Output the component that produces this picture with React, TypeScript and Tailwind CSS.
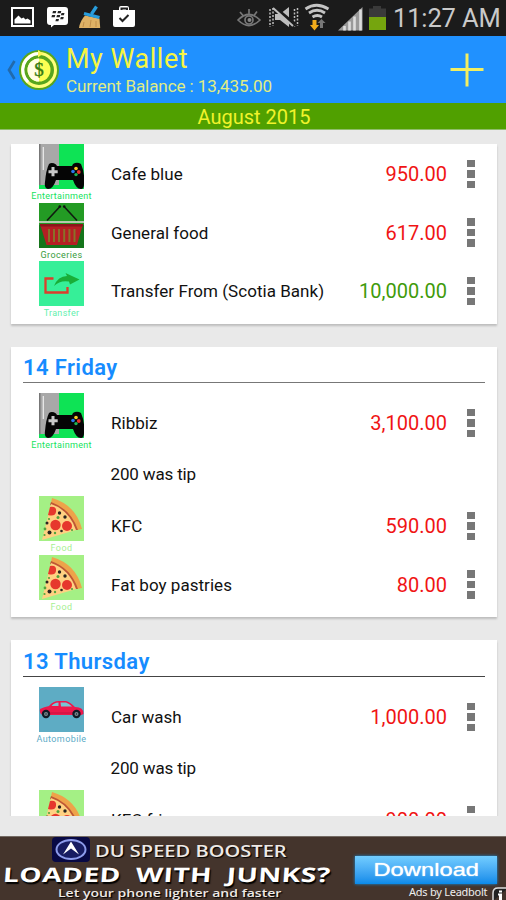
import React from "react";

type Category = "Entertainment" | "Groceries" | "Transfer" | "Food" | "Automobile";

interface Entry {
  category: Category;
  name: string;
  amount: string;
  income?: boolean;
  note?: string;
}

const labelStyles: Record<Category, string> = {
  Entertainment: "text-[#16e35d] tracking-[0.3px]",
  Groceries: "text-[#389b3c] tracking-[0.4px]",
  Transfer: "text-[#63efad] tracking-[0.3px]",
  Food: "text-[#a6ef93] tracking-[0.5px]",
  Automobile: "text-[#5cabc7] tracking-[0.4px]",
};

function Gamepad() {
  return (
    <svg viewBox="0 0 45 45" className="block size-[45px]">
      <path fill="#0ee355" d="M0 0h45v45H0z" />
      <path fill="#a8a8a8" d="M0 0h20v41H0z" />
      <path fill="#777" d="M0 0h1.5v41H0z" />
      <path fill="#eee" d="M3.7 3h1.2v23H3.7z" />
      <path fill="#050505" d="M10 20Q13 18 17 20.5L18 22H33L34 20Q38 17.5 42 20Q46 29 45 40Q45 45 42 45Q37 45 34 36H17Q14 45 9 45Q5 44 6 38Q7 26 10 20Z" />
      <path fill="#c9c9c9" d="M12.5 23h3v3.2h3.2v3h-3.2v3h-3v-3H9.5v-3h3z" />
      <circle cx="37" cy="24.5" r="1.8" fill="#f6cd23" />
      <circle cx="39.8" cy="28" r="1.9" fill="#e8312b" />
      <circle cx="34" cy="27.5" r="1.8" fill="#2878ed" />
      <circle cx="37" cy="30.6" r="1.7" fill="#1eb454" />
    </svg>
  );
}

function Basket() {
  return (
    <svg viewBox="0 0 45 45" className="block size-[45px]">
      <path fill="#239b24" d="M0 0h45v45H0z" />
      <path fill="#15751b" d="M0 22h45v23H0z" />
      <path stroke="#101c10" strokeWidth="1.6" d="M8 17.5 21 3.5M25 3.5 38 17.5" />
      <circle cx="20.8" cy="3.5" r="1.3" fill="#101010" />
      <circle cx="25.2" cy="3.5" r="1.3" fill="#101010" />
      <path fill="#b6c7ae" d="M0 18h45v2H0z" />
      <path fill="#b51f23" d="M1 21h43L38 42H7.5z" />
      <path fill="#8d151b" d="M1 21h43v2.5H1z" />
      <path stroke="#897129" strokeWidth="2" d="M10 26v13M15 26v13M20 26v13M25.2 26v13M30.4 26v13M35.5 26v13" />
    </svg>
  );
}

function Transfer() {
  return (
    <svg viewBox="0 0 45 45" className="block size-[45px]">
      <path fill="#36ef98" d="M0 0h45v45H0z" />
      <path fill="none" stroke="#de3d2b" strokeWidth="2.3" d="M14.5 17.5H6.5V31.5H28.5V26" />
      <path fill="#19ae38" d="M15 25Q19 15 28 15L26.5 12 40.5 18.5 31 23.5 30 20.5Q21 19 15 25Z" />
    </svg>
  );
}

function Pizza() {
  return (
    <svg viewBox="0 0 45 45" className="block size-[45px]">
      <path fill="#a4f085" d="M0 0h45v45H0z" />
      <path fill="#eea34a" d="M13 2Q37 9 43 33L38 34Q31 15 12 7Z" />
      <path fill="#be5635" d="M12 6Q32 13 39 34L35 34Q29 16 11 9Z" />
      <path fill="#ffd182" d="M12 8Q30 14 37 34L3 44Z" />
      <path fill="#e6382d" d="M11 11Q18 10 17 16Q16 21 9 19Z" />
      <circle cx="16.5" cy="29" r="5.2" fill="#e6382d" />
      <circle cx="28" cy="30" r="5" fill="#e6382d" />
      <g fill="#29241f">
        <circle cx="20.5" cy="17" r="1.7" />
        <circle cx="26" cy="21" r="1.7" />
        <circle cx="8" cy="27" r="1.5" />
        <circle cx="10.5" cy="36.5" r="2" />
        <circle cx="22.5" cy="35" r="1.3" />
      </g>
      <g fill="#52a43c">
        <circle cx="19" cy="21.5" r="1.5" />
        <circle cx="10" cy="23" r="1.1" />
        <circle cx="6" cy="33" r="1.4" />
        <circle cx="5.5" cy="39" r="1.1" />
        <circle cx="16" cy="37" r="1.2" />
        <circle cx="33" cy="34" r="1.1" />
      </g>
    </svg>
  );
}

function Car() {
  return (
    <svg viewBox="0 0 45 45" className="block size-[45px]">
      <path fill="#5eacc4" d="M0 0h45v45H0z" />
      <path fill="#ed174b" d="M1 22Q5 20 10 19Q14 14 20 14H27Q31 15 36 20Q45 20 44.5 27Q41 29 38 28H4Q0 27 1 22Z" />
      <path fill="#78c5d4" d="M12.5 19Q15 15.5 19.5 15.5V19ZM21.5 15.5H27Q30 16.5 33 19.5H22Z" />
      <path stroke="#bd103d" strokeWidth=".8" d="M5 26h35" />
      {[7, 37.5].map((x) => (
        <g key={x}>
          <circle cx={x} cy="27" r="4.2" fill="#111a24" />
          <circle cx={x} cy="27" r="2" fill="#79898d" />
          <circle cx={x} cy="27" r=".7" fill="#16202a" />
        </g>
      ))}
    </svg>
  );
}

const pictures: Record<Category, () => React.JSX.Element> = {
  Entertainment: Gamepad,
  Groceries: Basket,
  Transfer,
  Food: Pizza,
  Automobile: Car,
};

function Row({ entry }: { entry: Entry }) {
  const Picture = pictures[entry.category];
  return (
    <>
      <div className="flex h-[58.5px]">
        <div className="ml-[17.5px] flex w-[66px] shrink-0 flex-col items-center">
          <Picture />
          <span className={`mt-[2px] text-[9px] leading-[11px] ${labelStyles[entry.category]}`}>
            {entry.category}
          </span>
        </div>
        <span className="ml-[16.5px] h-[60px] flex-1 text-[17px] leading-[60px] tracking-[0.04px] whitespace-nowrap text-[#111]">
          {entry.name}
        </span>
        <span
          className={`h-[60px] text-[20px] leading-[60px] ${entry.income ? "text-[#3f9b0b]" : "text-[#f01414]"}`}
        >
          {entry.amount}
        </span>
        <div className="mr-[22.5px] ml-[20px] flex flex-col gap-[3px] pt-[15.5px]">
          <i className="size-[7.5px] bg-[#777]" />
          <i className="size-[7.5px] bg-[#777]" />
          <i className="size-[7.5px] bg-[#777]" />
        </div>
      </div>
      {entry.note && (
        <div className="h-[44.5px] pl-[99.5px] text-[17px] leading-[45px] tracking-[-0.15px] text-[#111]">
          {entry.note}
        </div>
      )}
    </>
  );
}

function DayCard({
  title,
  entries,
  className,
  headingClass = "",
}: {
  title?: string;
  entries: Entry[];
  className: string;
  headingClass?: string;
}) {
  return (
    <section className={`bg-white shadow-[0_1.5px_2px_#bdbdbd] ${className}`}>
      {title && (
        <h2
          className={`mx-[12px] mb-[10px] border-b-[1.5px] text-[22px] leading-[41px] font-semibold tracking-[0.4px] text-[#168cff] ${headingClass}`}
        >
          {title}
        </h2>
      )}
      {entries.map((entry) => (
        <Row key={entry.name} entry={entry} />
      ))}
    </section>
  );
}

function StatusBar() {
  return (
    <div className="flex h-[36px] shrink-0 items-center bg-[#1b1b1b]">
      <svg viewBox="0 0 390 36" className="h-[36px] w-[390px] shrink-0">
        <path fill="none" stroke="#fff" strokeWidth="2" d="M12 8h21v18H12z" />
        <path fill="#fff" d="M14.5 23.5v-4l4-4 3 3 2-1 2 2 2-1 3 2v3z" />
        <path fill="#fff" d="M49 7h16q3 0 3 3v12q0 3-3 3H54l-3 2.5v-2.5h-1q-3 0-3-3V10q0-3 2-3z" />
        <path
          fill="#252525"
          d="M53 11h3.300l-.6 2.300h-3.300zM58 11h3.300l-.6 2.300h-3.300zM52 15h3.300l-.6 2.300h-3.300zM57 15h3.300l-.6 2.300h-3.300zM61.500 13h3l-.6 2.300h-3zM60.800 17h3l-.6 2.300h-3zM56 19h3l-.6 2.300h-3z"
        />
        <path fill="#dfb265" d="M85 15.500 99.500 18.500l.7 9.500H79q1-7 6-12.500z" />
        <path stroke="#b98743" strokeWidth=".8" d="m84 22-1 5m8-7-1 7m6-6v6" />
        <path fill="none" stroke="#289ddc" strokeWidth="3.3" d="m84 13.500 15.500 4M91.500 14l5-7.500" />
        <path fill="#fff" d="M113 10h6V8q0-2 2-2h6q2 0 2 2v2h6v15q0 2-2 2h-18q-2 0-2-2z" />
        <path stroke="#222" strokeWidth="2" fill="none" d="m119.500 18 3 3 6-6M121.500 10V8.500h5.500V10" />
        <g fill="none" stroke="#777" strokeWidth="1.7">
          <path d="M238 20q11-11 22 0-11 11-22 0zM240 12l3 3.500m6-6.500v4.500m8-2-3 4" />
          <circle cx="249" cy="20" r="4" />
        </g>
        <circle cx="249.500" cy="20" r="2" fill="#888" />
        <path stroke="#bebebe" strokeWidth="1.5" strokeDasharray="2 1.5" d="M270 9v18M273 8v18M294.500 9v18M297.500 8v18" />
        <path fill="#bebebe" d="M275 14h5l9-7v20l-9-7h-5z" />
        <path stroke="#1b1b1b" strokeWidth="4" d="m275 8 20 17" />
        <path stroke="#bebebe" strokeWidth="2" d="m273 8 20 18" />
        <path
          fill="none"
          stroke="#c4c4c4"
          strokeWidth="2.8"
          d="M305.500 9q11-7.500 23 0M309 13q8-5.500 16 0M312.500 17q5-3 9.500 0"
        />
        <path fill="#f1ab1b" d="M312.500 20h4v5h2.500l-4.500 5.500-4.500-5.500h2.500z" />
        <path fill="#777" d="M320 28v-5h-2.500l4-4 4 4H323v5z" />
        <path fill="#999" d="M338 30.500 362.500 7v23.500z" />
        <path stroke="#ddd" strokeWidth="2.6" d="M344.500 26v4.500m5-9v9m5-14v14m6-21v21" />
        <path fill="#3a3a3a" d="M373 6h8v2.500h5V17h-17V8.500h4z" />
        <path fill="#75a50e" d="M369 17h17v13h-17z" />
      </svg>
      <span className="ml-[3px] text-[25.5px] leading-[34px] tracking-[-0.15px] whitespace-nowrap text-[#c9c9c9]">
        11:27 AM
      </span>
    </div>
  );
}

function Header() {
  return (
    <header className="flex h-[67px] shrink-0 items-center bg-[#2091ff]">
      <svg viewBox="0 0 12 24" className="ml-[5px] h-[24px] w-[12px]">
        <path d="M9.500 3 4 12l5.500 9" fill="none" stroke="#216aad" strokeWidth="2.7" />
      </svg>
      <svg viewBox="0 0 42 42" className="ml-[1px] size-[42px]">
        <circle cx="21" cy="21" r="20" fill="#58a51e" />
        <circle cx="21" cy="21" r="16.500" fill="none" stroke="#ffff7c" strokeWidth="3" />
        <path d="M21 4.500A16.500 16.500 0 0 0 10 33" fill="none" stroke="#fff" strokeWidth="3" />
        <path fill="#fff75a" d="m20 1 5 3.500-5 4z" />
        <circle cx="21" cy="21" r="11.500" fill="#fcff53" />
        <path d="M21 9.500a11.500 11.500 0 0 0 0 23z" fill="#fffee4" />
        <text x="21" y="27" textAnchor="middle" fill="#377b13" stroke="#377b13" strokeWidth=".4" fontFamily="Liberation Serif, serif" fontSize="19">
          $
        </text>
      </svg>
      <div className="ml-[6px] flex flex-1 flex-col pt-[1px]">
        <h1 className="text-[27px] leading-[31px] tracking-[0.5px] text-[#f7f443]">My Wallet</h1>
        <span className="text-[17px] leading-[22px] tracking-[-0.07px] text-[#e1ed83]">
          Current Balance : 13,435.00
        </span>
      </div>
      <svg viewBox="0 0 34 34" className="mr-[22px] size-[34px]">
        <path stroke="#f2ee61" strokeWidth="3" d="M17 .5v33M.5 16.500h33" />
      </svg>
    </header>
  );
}

function AdBanner() {
  return (
    <footer className="relative h-[64px] shrink-0 overflow-hidden border-t border-[#746b64] bg-[#44342c] text-white">
      <div className="flex h-[27px] items-center pl-[52px]">
        <svg viewBox="0 0 38 27" className="h-[27px] w-[38px]">
          <rect width="38" height="25" rx="4" fill="#080944" />
          <ellipse cx="19" cy="12.500" rx="14.5" ry="9.5" fill="#171c62" stroke="#8d9cec" strokeWidth="2" />
          <path d="m11 17.500 8-13 8 13-8-6z" fill="#fff" />
        </svg>
        <span className="ml-[5px] origin-left scale-x-[1.18] text-[17px] leading-[27px] font-semibold whitespace-nowrap text-[#eee9e5] [font-family:'Open_Sans',sans-serif] [text-shadow:1px_1px_1px_#000]">
          DU SPEED BOOSTER
        </span>
      </div>
      <div className="ml-[3px] h-[22px] w-max origin-left scale-x-[1.41] -skew-x-3 text-[20px] leading-[22px] font-bold tracking-[0.3px] whitespace-nowrap [font-family:'Open_Sans',sans-serif] [text-shadow:1px_2px_1px_#000] [word-spacing:5px]">
        LOADED WITH JUNKS?
      </div>
      <div className="ml-[58px] h-[14px] w-max origin-left scale-x-[1.275] text-[11px] leading-[13px] font-semibold whitespace-nowrap text-[#eee9e5] [font-family:'Open_Sans',sans-serif] [text-shadow:1px_1px_1px_#000]">
        Let your phone lighter and faster
      </div>
      <button className="absolute top-[19px] left-[355px] flex h-[28px] w-[142px] items-center justify-center bg-linear-to-b from-[#72cdff] to-[#078ae9] shadow-[0_0_3px_#168fe0]">
        <span className="scale-x-[1.25] text-[19px] leading-[28px] text-white [font-family:'Liberation_Sans',sans-serif] [text-shadow:0_0_1px_#fff]">
          Download
        </span>
      </button>
      <span className="absolute top-[47px] left-[409px] text-[11px] leading-[15px] tracking-[-0.25px] whitespace-nowrap text-[#eee] [font-family:'Noto_Sans',sans-serif]">
        Ads by Leadbolt
      </span>
      <svg viewBox="0 0 14 14" className="absolute top-[49px] left-[492px] size-[14px]">
        <path d="M1 15V7q0-5 5-5h10" fill="#222" stroke="#ddd" strokeWidth="1.5" />
        <path fill="#fff" d="M7 4.500h3v2H7zM6 7.500h4v7H7v-5H6z" />
      </svg>
    </footer>
  );
}

const latest: Entry[] = [
  { category: "Entertainment", name: "Cafe blue", amount: "950.00" },
  { category: "Groceries", name: "General food", amount: "617.00" },
  { category: "Transfer", name: "Transfer From (Scotia Bank)", amount: "10,000.00", income: true },
];
const friday: Entry[] = [
  { category: "Entertainment", name: "Ribbiz", amount: "3,100.00", note: "200 was tip" },
  { category: "Food", name: "KFC", amount: "590.00" },
  { category: "Food", name: "Fat boy pastries", amount: "80.00" },
];
const thursday: Entry[] = [
  { category: "Automobile", name: "Car wash", amount: "1,000.00", note: "200 was tip" },
  { category: "Food", name: "KFC fries", amount: "900.00" },
];

export default function App() {
  return (
    <div className="flex h-[900px] w-[506px] flex-col overflow-hidden bg-[#e9e9e9] [font-family:Roboto,sans-serif]">
      <StatusBar />
      <Header />
      <div className="h-[27px] shrink-0 border-b border-[#8fbd6c] bg-[#50a000] pl-[2px] text-center text-[20px] leading-[29px] text-[#f0f32b]">
        August 2015
      </div>
      <main className="flex h-[686px] shrink-0 flex-col gap-[23px] overflow-hidden pt-[14px] pr-[9px] pl-[11px]">
        <DayCard className="h-[180px] shrink-0" entries={latest} />
        <DayCard className="h-[270px] shrink-0" title="14 Friday" entries={friday} headingClass="h-[36px] border-[#777]" />
        <DayCard className="h-[190px] shrink-0" title="13 Thursday" entries={thursday} headingClass="h-[37px] border-[#444] pt-px" />
      </main>
      <div className="h-[20px] shrink-0" />
      <AdBanner />
    </div>
  );
}
